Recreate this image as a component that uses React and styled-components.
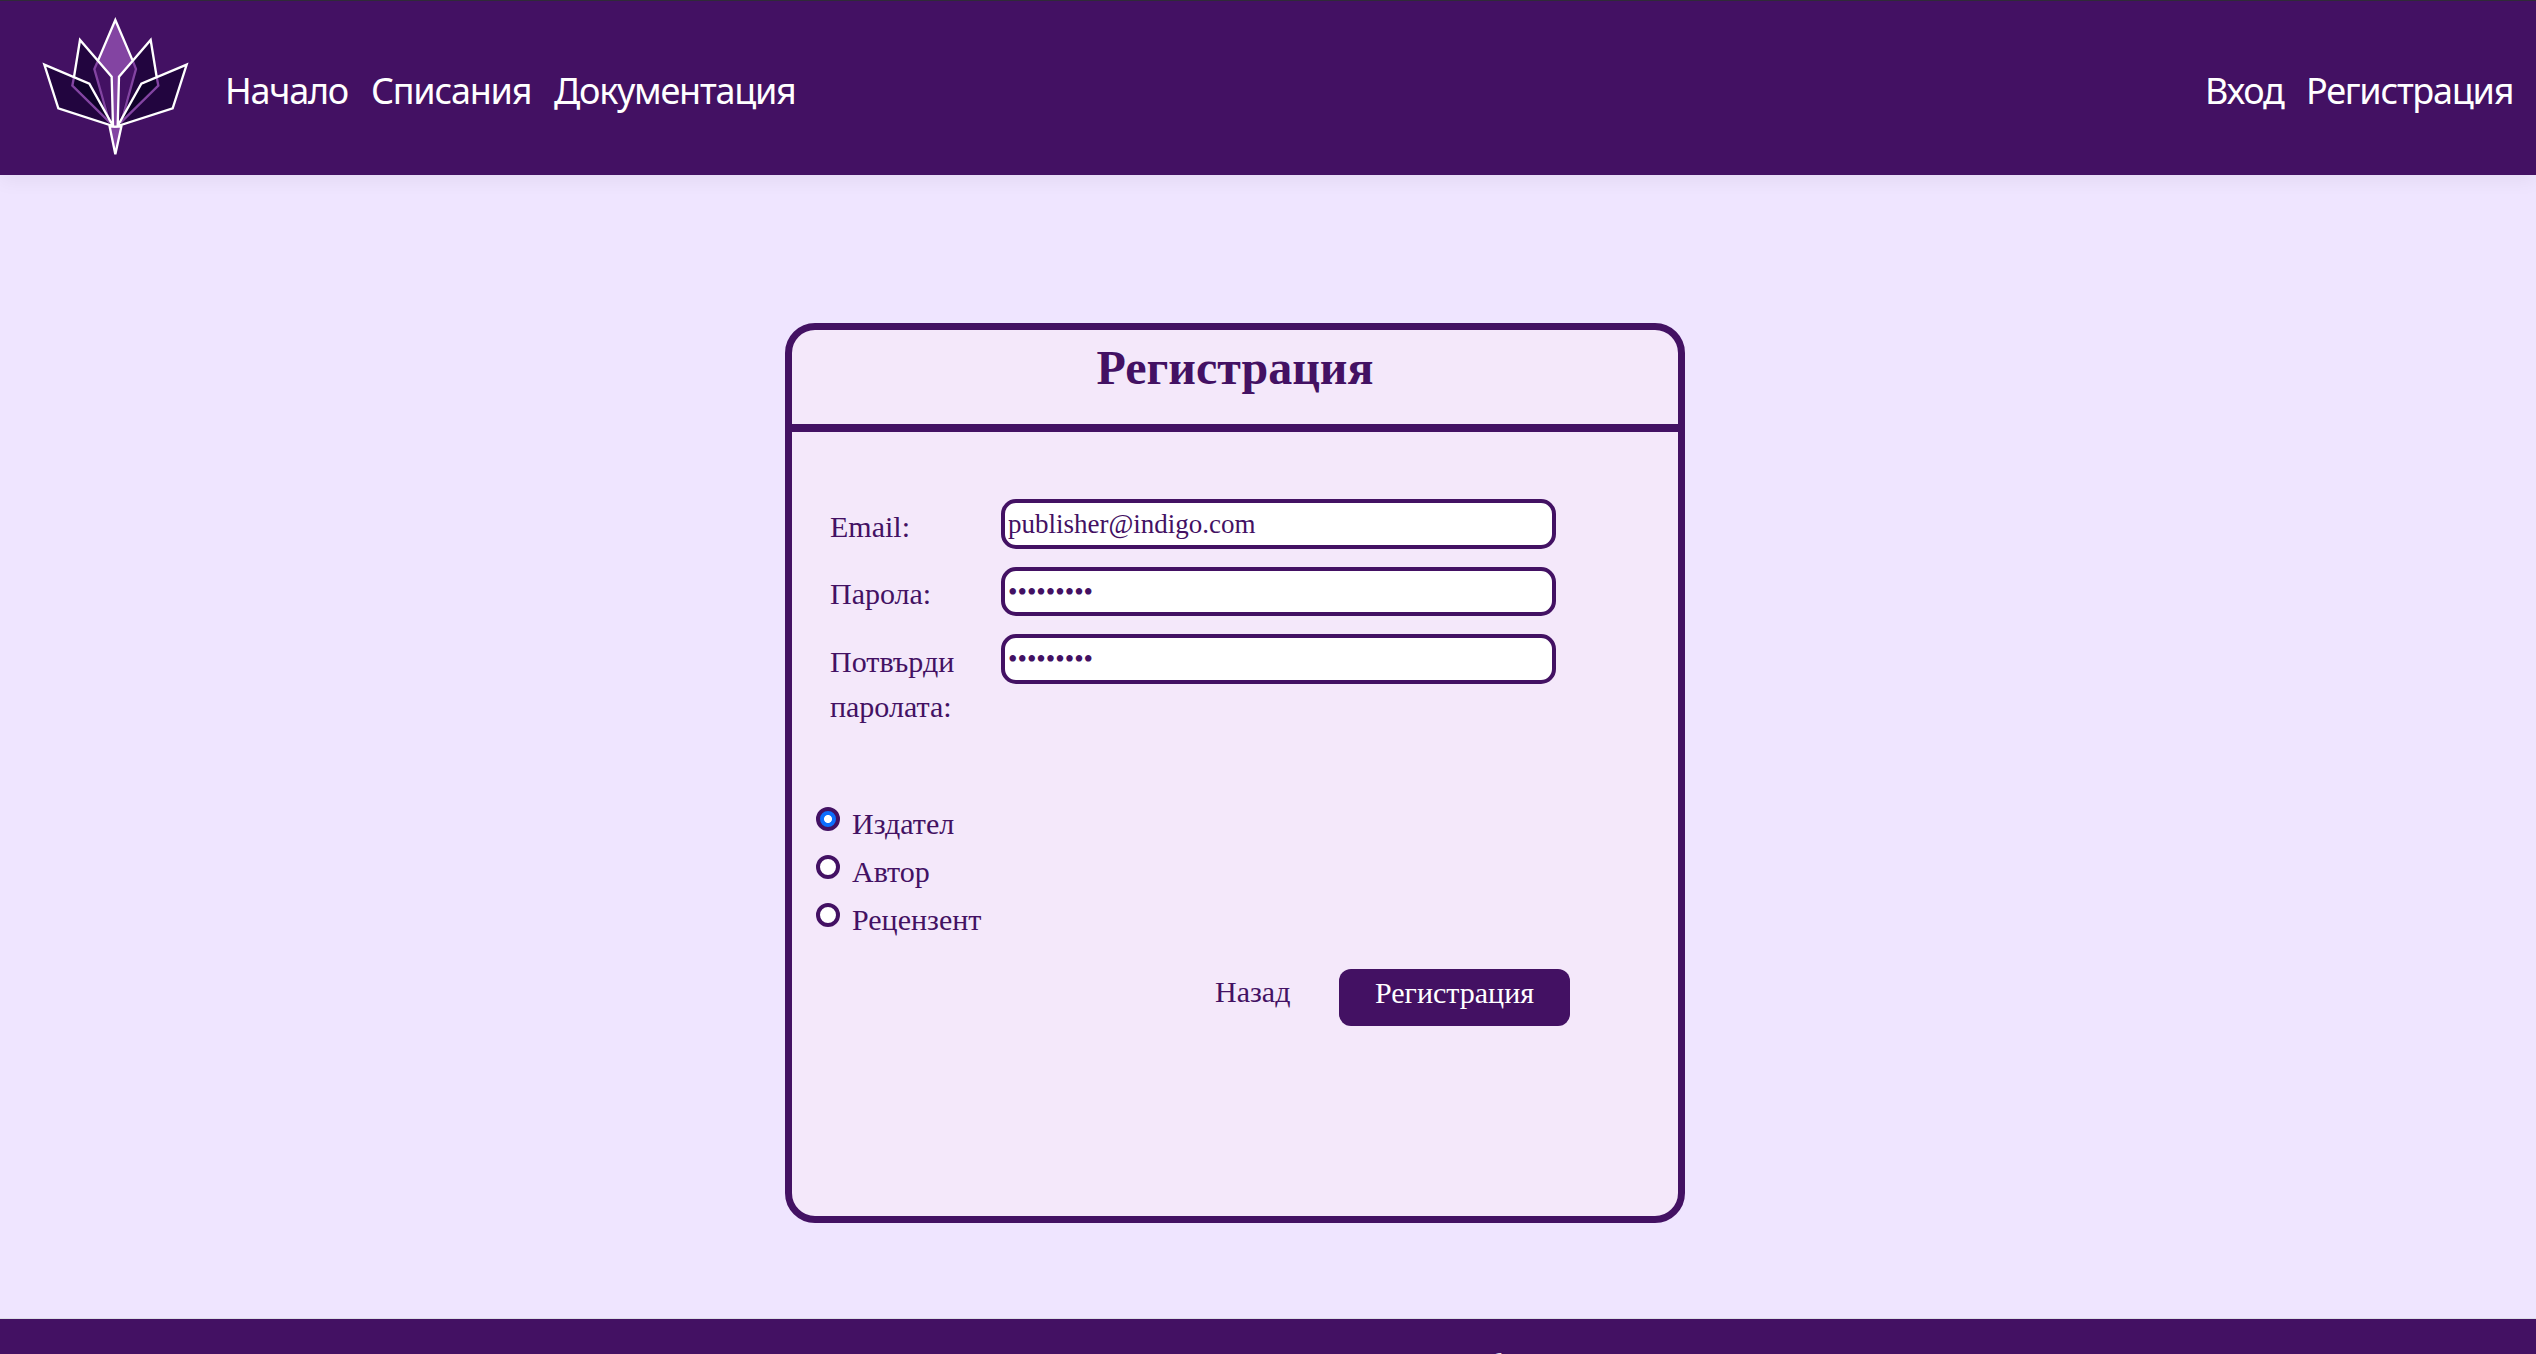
import React from "react";
import styled, { createGlobalStyle } from "styled-components";

const indigo = "#431163";
const serif = '"Liberation Serif", "Times New Roman", serif';
const sans = '"Noto Sans", "Segoe UI", sans-serif';

const GlobalStyle = createGlobalStyle`
  *, *::before, *::after { box-sizing: border-box; }
  html, body { margin: 0; height: 100%; overflow: hidden; }
  body { background: #efe5ff; color: ${indigo}; font-family: ${serif}; }
`;

const Page = styled.div`
  display: flex;
  flex-direction: column;
  height: 1354px;
  overflow: hidden;
`;

const Header = styled.header`
  display: flex;
  align-items: flex-start;
  flex: none;
  height: 175px;
  padding: 16px 24px 0 40px;
  border-top: 1px solid #2f2b38;
  background: ${indigo};
  box-shadow: 0 6px 18px rgba(0, 0, 0, 0.05);
`;

const Logo = styled.svg`
  flex: none;
  width: 150px;
  height: 140px;
  margin-right: 35px;
`;

const Nav = styled.nav`
  display: flex;
  gap: 24px;
  margin-left: ${(p) => (p.$end ? "auto" : "0")};
  padding-top: 47px;
`;

const NavLink = styled.a`
  width: ${(p) => p.$width}px;
  color: #fff;
  font: 400 36px/54px ${sans};
  letter-spacing: -1.25px;
  white-space: nowrap;
`;

const Main = styled.main`
  flex: 1;
  padding: 148px 0 0 785px;
`;

const Card = styled.section`
  width: 900px;
  height: 900px;
  border: 7px solid ${indigo};
  border-radius: 30px;
  background: #f4e8fa;
`;

const CardHeader = styled.header`
  height: 102px;
  padding-top: 9px;
  border-bottom: 8px solid ${indigo};
`;

const Title = styled.h1`
  margin: 0;
  text-align: center;
  font: 700 48px/58px ${serif};
`;

const Form = styled.form`
  padding: 67px 0 0 24px;
`;

const Fields = styled.div`
  display: grid;
  grid-template-columns: 171px 555px;
  grid-template-rows: 68px 67px 108px;
  padding-left: 14px;
`;

const Label = styled.label`
  font-size: 30px;
  line-height: 45px;
  padding-top: ${(p) => p.$top}px;
  width: 150px;
`;

const Input = styled.input`
  width: 555px;
  height: ${(p) => p.$height || 50}px;
  padding: 1px 3px 0;
  border: 4px solid ${indigo};
  border-radius: 15px;
  outline: 0;
  background: #fff;
  color: ${indigo};
  font-family: ${serif};
  font-size: 27px;
`;

const Roles = styled.div`
  display: flex;
  flex-direction: column;
  margin-top: 65px;
`;

const Role = styled.label`
  display: flex;
  align-items: flex-start;
  gap: 12px;
  height: 48px;
  font-size: 30px;
  line-height: 34px;
`;

const Radio = styled.input`
  appearance: none;
  flex: none;
  width: 24px;
  height: 24px;
  margin: 0;
  border: 4px solid ${indigo};
  border-radius: 50%;
  background: #fff;
  &:checked {
    background: radial-gradient(circle, #fff 3.6px, #0d6efd 4.4px);
  }
`;

const Actions = styled.div`
  display: flex;
  margin: 18px 0 0 399px;
  font-size: 30px;
  line-height: 45px;
`;

const BackLink = styled.a`
  width: 124px;
`;

const Submit = styled.button`
  width: 231px;
  height: 57px;
  padding: 0 0 11px;
  border: 0;
  border-radius: 12px;
  background: ${indigo};
  color: #fff;
  font: 400 30px/45px ${serif};
`;

const Footer = styled.footer`
  flex: none;
  height: 36px;
  padding: 23px 0 0 1483px;
  overflow: hidden;
  border-top: 1px solid #dcdde6;
  background: ${indigo};
  color: #fff;
  font: 400 36px/54px ${sans};
`;

function LotusLogo() {
  return (
    <Logo viewBox="60 51 450 420" fill="none" strokeWidth="7">
      <path d="M286 60 223 207 272 378H300L348 207Z" fill="#8344a2" />
      <path d="M180 120 275 230 279 378 157 257Z" fill="#22053f" />
      <path d="M392 120 297 230 293 378 415 257Z" fill="#22053f" />
      <path d="M234 182 275 230 279 378 223 207Z" fill="#431163" />
      <path d="M338 182 297 230 293 378 348 207Z" fill="#431163" />
      <path d="M234 182 223 207 270 372M338 182 348 207 302 372" stroke="#8344a2" />
      <path d="M73 194 208 251 279 378 115 325Z M500 194 364 251 293 378 458 325Z" fill="#22053f" />
      <path d="M162 231 208 251 279 378 157 257Z M410 231 364 251 293 378 415 257Z" fill="#10022a" />
      <path d="M162 231 157 257 270 368M410 231 415 257 302 368" stroke="#8344a2" />
      <path d="M269 380H304L286 463Z" fill="#8344a2" stroke="#fff" />
      <path
        d="M234 182 286 60 338 182M162 231 180 120 275 230 279 378M410 231 392 120 297 230 293 378M73 194 208 251 279 378 115 325ZM500 194 364 251 293 378 458 325Z"
        stroke="#fff"
      />
    </Logo>
  );
}

export default function App() {
  return (
    <>
      <GlobalStyle />
      <Page>
        <Header>
          <LotusLogo />
          <Nav>
            <NavLink $width={122}>Начало</NavLink>
            <NavLink $width={159}>Списания</NavLink>
            <NavLink $width={242}>Документация</NavLink>
          </Nav>
          <Nav $end>
            <NavLink $width={77}>Вход</NavLink>
            <NavLink $width={206}>Регистрация</NavLink>
          </Nav>
        </Header>
        <Main>
          <Card>
            <CardHeader>
              <Title>Регистрация</Title>
            </CardHeader>
            <Form>
              <Fields>
                <Label htmlFor="email" $top={5}>Email:</Label>
                <Input id="email" type="text" defaultValue="publisher@indigo.com" />
                <Label htmlFor="password" $top={4}>Парола:</Label>
                <Input id="password" type="password" $height={49} defaultValue="indigo123" />
                <Label htmlFor="confirm" $top={5}>Потвърди паролата:</Label>
                <Input id="confirm" type="password" defaultValue="indigo123" />
              </Fields>
              <Roles>
                <Role><Radio type="radio" name="role" defaultChecked />Издател</Role>
                <Role><Radio type="radio" name="role" />Автор</Role>
                <Role><Radio type="radio" name="role" />Рецензент</Role>
              </Roles>
              <Actions>
                <BackLink>Назад</BackLink>
                <Submit type="button">Регистрация</Submit>
              </Actions>
            </Form>
          </Card>
        </Main>
        <Footer>б</Footer>
      </Page>
    </>
  );
}
